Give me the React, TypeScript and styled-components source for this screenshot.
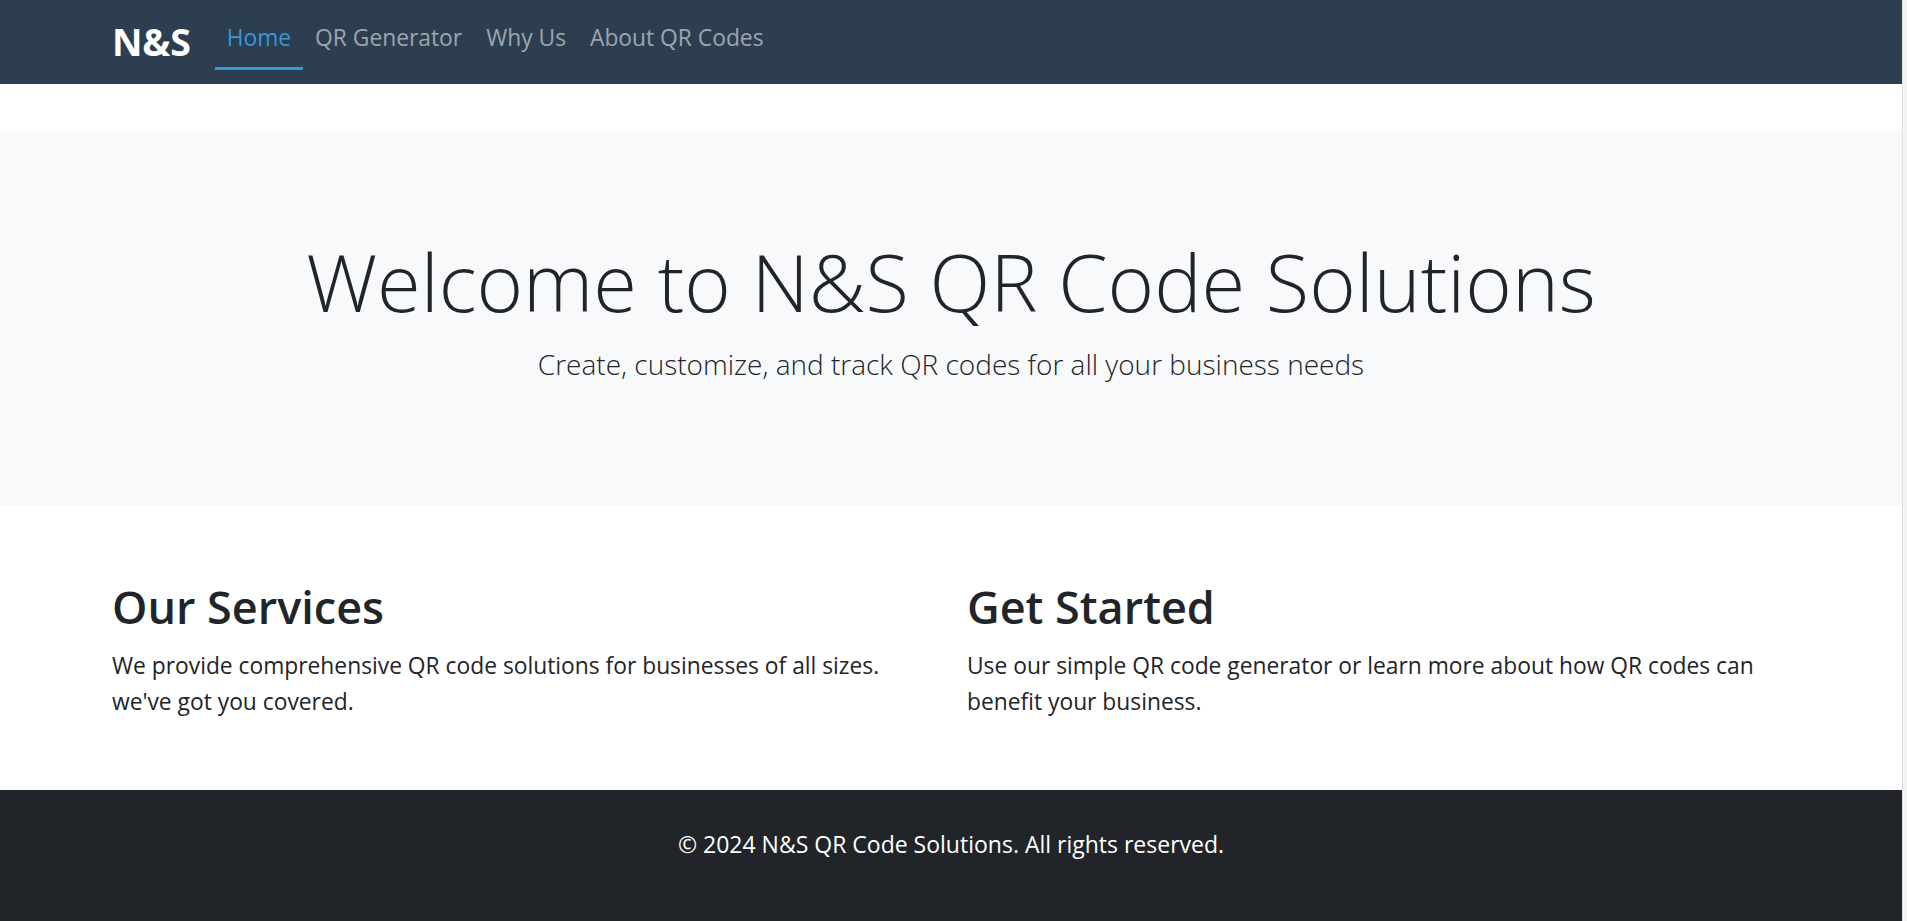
import React from "react";
import styled, { createGlobalStyle } from "styled-components";

const GlobalStyle = createGlobalStyle`
  html, body {
    margin: 0;
    padding: 0;
    overflow: hidden;
    background: #ffffff;
  }
  body {
    font-family: "Open Sans", "Noto Sans", sans-serif;
    font-size: 22.8px;
    line-height: 36px;
    color: #212529;
  }
  * { box-sizing: border-box; }
`;

const Frame = styled.div`
  display: grid;
  grid-template-columns: 1fr 5px;
  height: 921px;
  overflow: hidden;
`;

const Page = styled.div`
  display: flex;
  flex-direction: column;
  min-width: 0;
`;

const ScrollTrack = styled.div`
  background: #f3f3f3;
  border-left: 1px solid #e2e2e2;
`;

const Container = styled.div`
  width: 100%;
  max-width: 1710px;
  margin: 0 auto;
  padding: 0 16px;
`;

const NavBar = styled.nav`
  background: #2c3e50;
  height: 84px;
  flex-shrink: 0;
`;

const NavInner = styled(Container)`
  display: flex;
  align-items: center;
  height: 100%;
`;

const Brand = styled.a`
  font-size: 37.5px;
  font-weight: 700;
  color: #ffffff;
  text-decoration: none;
  margin-right: 24px;
  line-height: 54px;
  letter-spacing: -0.2px;
`;

const NavList = styled.ul`
  display: flex;
  list-style: none;
  margin: 0;
  padding: 0;
`;

const NavLink = styled.a<{ $active?: boolean }>`
  display: block;
  font-size: 22.8px;
  line-height: 36px;
  padding: 6px 12px 11px;
  text-decoration: none;
  color: ${(p) => (p.$active ? "#3498db" : "rgba(255, 255, 255, 0.55)")};
  border-bottom: 3px solid ${(p) => (p.$active ? "#3498db" : "transparent")};
`;

const Hero = styled.section`
  margin-top: 47px;
  background: #f8f9fa;
  padding: 100px 0 119px;
  text-align: center;
  flex-shrink: 0;
`;

const HeroTitle = styled.h1`
  font-size: 79.5px;
  font-weight: 300;
  line-height: 101px;
  margin: 0 0 10px;
`;

const Lead = styled.p`
  font-size: 28px;
  font-weight: 300;
  line-height: 45px;
  margin: 0;
`;

const Features = styled.section`
  padding: 72px 0 70px;
  flex-shrink: 0;
`;

const Row = styled(Container)`
  display: grid;
  grid-template-columns: 1fr 1fr;
  column-gap: 32px;
`;

const Column = styled.div`
  min-width: 0;
`;

const SectionTitle = styled.h2`
  font-size: 45px;
  font-weight: 600;
  line-height: 57.6px;
  margin: 0 0 12px;
`;

const Text = styled.p`
  margin: 0;
  font-size: 22.8px;
  line-height: 36px;
`;

const Footer = styled.footer`
  background: #212529;
  color: #ffffff;
  text-align: center;
  padding: 36px 0 60px;
  flex: 1;
`;

const FooterText = styled.p`
  margin: 0;
  font-size: 23px;
  line-height: 36px;
`;

const links = [
  { label: "Home", active: true },
  { label: "QR Generator" },
  { label: "Why Us" },
  { label: "About QR Codes" },
];

export default function App() {
  return (
    <>
      <GlobalStyle />
      <Frame>
        <Page>
          <NavBar>
            <NavInner>
              <Brand href="#">N&amp;S</Brand>
              <NavList>
                {links.map((l) => (
                  <li key={l.label}>
                    <NavLink href="#" $active={l.active}>
                      {l.label}
                    </NavLink>
                  </li>
                ))}
              </NavList>
            </NavInner>
          </NavBar>
          <Hero>
            <HeroTitle>Welcome to N&amp;S QR Code Solutions</HeroTitle>
            <Lead>Create, customize, and track QR codes for all your business needs</Lead>
          </Hero>
          <Features>
            <Row>
              <Column>
                <SectionTitle>Our Services</SectionTitle>
                <Text>
                  We provide comprehensive QR code solutions for businesses of all sizes.
                  <br />
                  we've got you covered.
                </Text>
              </Column>
              <Column>
                <SectionTitle>Get Started</SectionTitle>
                <Text>
                  Use our simple QR code generator or learn more about how QR codes can
                  <br />
                  benefit your business.
                </Text>
              </Column>
            </Row>
          </Features>
          <Footer>
            <FooterText>© 2024 N&amp;S QR Code Solutions. All rights reserved.</FooterText>
          </Footer>
        </Page>
        <ScrollTrack />
      </Frame>
    </>
  );
}
